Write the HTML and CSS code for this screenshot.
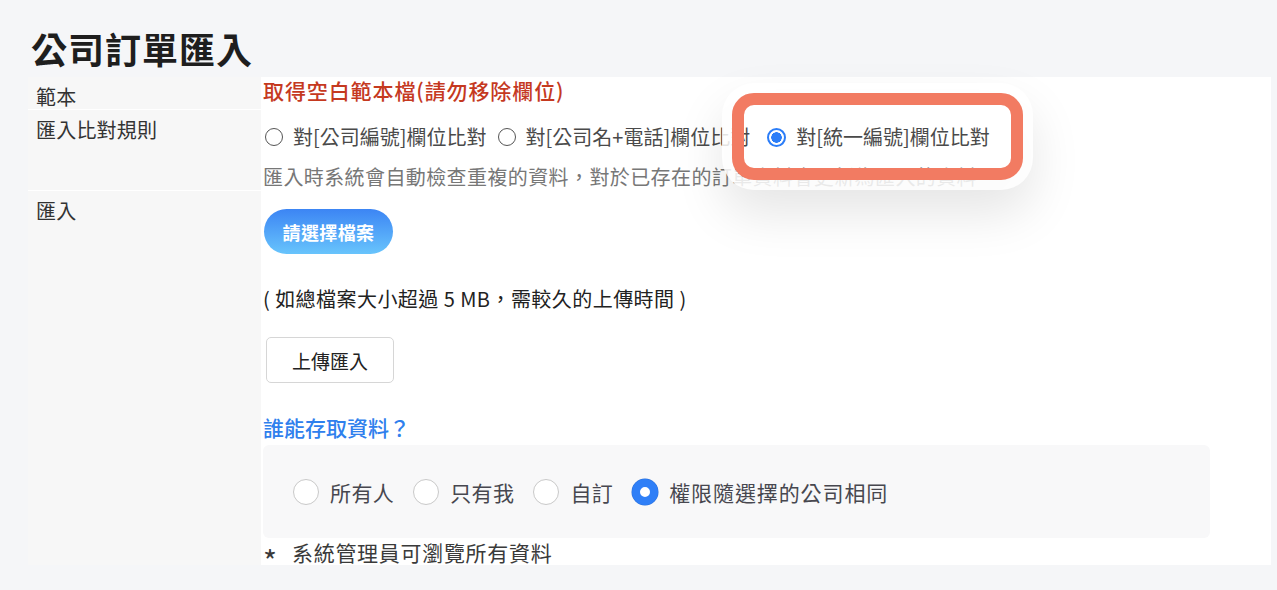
FILE: index.html
```html
<!DOCTYPE html>
<html lang="zh-Hant">
<head>
<meta charset="utf-8">
<title>公司訂單匯入</title>
<link rel="stylesheet" href="styles.css">
</head>
<body>
<div class="page">
  <h1 class="title">公司訂單匯入</h1>
  <div class="form">
    <div class="label">範本</div>
    <div class="cell cell-template"><a class="template-link" href="#">取得空白範本檔(請勿移除欄位)</a></div>

    <div class="label">匯入比對規則</div>
    <div class="cell cell-rule">
      <div class="rule-options">
        <label class="opt"><span class="radio"></span><span class="opt-text">對[公司編號]欄位比對</span></label>
        <label class="opt opt-wide"><span class="radio"></span><span class="opt-text">對[公司名+電話]欄位比對</span></label>
        <label class="opt"><span class="radio radio-on"></span><span class="opt-text">對[統一編號]欄位比對</span></label>
      </div>
      <p class="help">匯入時系統會自動檢查重複的資料，對於已存在的訂單資料會更新為匯入的資料</p>
    </div>

    <div class="label">匯入</div>
    <div class="cell cell-import">
      <button class="btn-file" type="button">請選擇檔案</button>
      <p class="size-note">( 如總檔案大小超過 5 MB，需較久的上傳時間 )</p>
      <button class="btn-upload" type="button">上傳匯入</button>
      <h3 class="access-title">誰能存取資料？</h3>
      <div class="access-box">
        <label class="access-opt"><span class="big-radio"></span><span class="access-text">所有人</span></label>
        <label class="access-opt"><span class="big-radio"></span><span class="access-text">只有我</span></label>
        <label class="access-opt"><span class="big-radio"></span><span class="access-text">自訂</span></label>
        <label class="access-opt"><span class="big-radio big-radio-on"></span><span class="access-text access-long">權限隨選擇的公司相同</span></label>
      </div>
      <p class="footnote"><span class="star">*</span>系統管理員可瀏覽所有資料</p>
    </div>
  </div>
  <div class="highlight"></div>
</div>
</body>
</html>
```

FILE: styles.css
```css
* { box-sizing: border-box; }
html, body { margin: 0; }
body {
  background: #f5f6f8;
  font-family: "Noto Sans CJK TC", "Noto Sans", sans-serif;
  color: #333;
}
.page {
  position: relative;
  padding: 30px 6px 25px 28px;
}
.title {
  margin: 0 0 11px 3px;
  font-size: 36px;
  line-height: 36px;
  font-weight: 700;
  color: #1e1e1e;
  letter-spacing: 1px;
}
.form {
  display: grid;
  grid-template-columns: 233px 1010px;
  row-gap: 1px;
  background: #fff;
  width: 1243px;
}
.label {
  background: #f7f7f7;
  padding: 8px 8px 0;
  font-size: 20px;
  line-height: 24px;
  color: #333;
  letter-spacing: 0.2px;
}
.cell {
  background: #fff;
  padding-left: 2px;
}
.template-link {
  display: block;
  font-size: 21px;
  line-height: 26px;
  font-weight: 500;
  color: #c5391f;
  text-decoration: none;
  letter-spacing: 0.9px;
}
.rule-options {
  display: flex;
  align-items: center;
  height: 40px;
  margin-top: 7px;
}
.opt {
  display: flex;
  align-items: center;
  margin-right: 9px;
}
.opt-wide {
  margin-right: 15px;
}
.radio {
  width: 18px;
  height: 18px;
  border-radius: 50%;
  border: 1.5px solid #555;
  background: #fff;
  margin: 0 10px 0 2px;
  flex: none;
}
.radio-on {
  width: 19px;
  height: 19px;
  border: 2px solid #2b7df8;
  background: radial-gradient(circle, #2b7df8 0 5px, #fff 5.5px);
}
.opt-text {
  font-size: 20px;
  line-height: 26px;
  color: #4a4a4a;
}
.help {
  margin: 7px 0 0;
  font-size: 20px;
  line-height: 26px;
  color: #777;
  letter-spacing: 0.4px;
}
.cell-import {
  display: flex;
  flex-direction: column;
  align-items: flex-start;
}
.btn-file {
  margin: 18px 0 0 1px;
  width: 129px;
  height: 45px;
  border: none;
  border-radius: 23px;
  background: linear-gradient(180deg, #3c85f4 0%, #68c4fc 100%);
  color: #fff;
  font-family: inherit;
  font-size: 18px;
  font-weight: 700;
  letter-spacing: 0.4px;
  padding: 0;
}
.size-note {
  margin: 30px 0 0;
  font-size: 20px;
  line-height: 30px;
  color: #222;
  letter-spacing: 0.45px;
}
.btn-upload {
  margin: 23px 0 0 3px;
  width: 128px;
  height: 46px;
  border: 1px solid #d6d6d6;
  border-radius: 5px;
  background: #fff;
  color: #222;
  font-family: inherit;
  font-size: 19px;
  padding: 0;
}
.access-title {
  margin: 29px 0 0;
  font-size: 21px;
  line-height: 30px;
  font-weight: 500;
  color: #2f80ed;
}
.access-box {
  align-self: stretch;
  margin: 3px 61px 0 0;
  height: 93px;
  border-radius: 6px;
  background: #f8f8f9;
  display: flex;
  align-items: center;
  padding-left: 30px;
}
.access-opt {
  display: flex;
  align-items: center;
  margin-right: 19px;
}
.big-radio {
  width: 26px;
  height: 26px;
  border-radius: 50%;
  border: 1.5px solid #c9c9c9;
  background: #fff;
  margin-right: 11px;
  flex: none;
}
.big-radio-on {
  border: 8px solid #2f7ff7;
  box-shadow: 0 0 0 0.5px #2a6fd8;
}
.access-text {
  font-size: 21px;
  line-height: 30px;
  color: #47474f;
  letter-spacing: 0.4px;
}
.access-long {
  letter-spacing: 0.9px;
}
.footnote {
  margin: 1px 0 0;
  height: 26px;
  font-size: 21px;
  line-height: 26px;
  color: #3a3a3a;
  letter-spacing: 0.7px;
}
.star {
  display: inline-block;
  width: 29px;
  font-size: 30px;
  vertical-align: -12px;
  line-height: 20px;
}
.highlight {
  position: absolute;
  left: 732px;
  top: 93px;
  width: 291px;
  height: 87px;
  border: 12px solid #f27b62;
  border-radius: 22px;
  box-shadow: 0 0 0 10px rgba(255, 255, 255, 0.85), 0 24px 50px 10px rgba(0, 0, 0, 0.1);
  pointer-events: none;
}
```
